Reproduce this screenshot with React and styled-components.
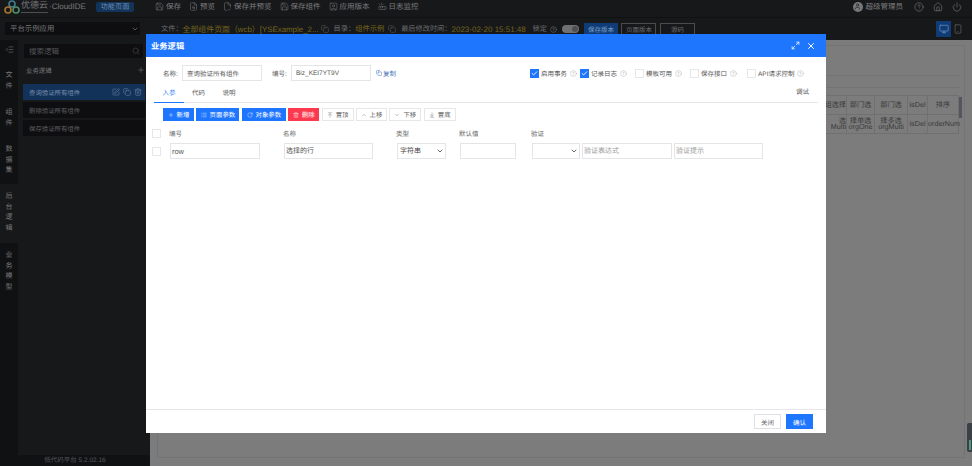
import styled, { createGlobalStyle } from "styled-components";
import {
  Save, FileSearch, FileCheck2, SquareUser, Projector, CircleHelp, House, Power, Copy, Search,
  Plus, SquarePen, Trash2, Monitor, Smartphone, Maximize2, X, List, RotateCw, ChevronUp, ChevronDown,
  ArrowUpToLine, ArrowDownToLine, User, Check, IndentDecrease,
} from "lucide-react";

const GlobalStyle = createGlobalStyle`
  html, body { margin: 0; padding: 0; background: #17181a; }
  body {
    font-family: "Liberation Sans", "Noto Sans CJK SC", sans-serif;
    text-rendering: geometricPrecision;
  }
  input { text-rendering: geometricPrecision; }
  * { box-sizing: border-box; }
`;

const Page = styled.div`
  position: relative;
  width: 972px;
  height: 466px;
  overflow: hidden;
  display: flex;
  flex-direction: column;
  background: #17181a;
`;

const TopBar = styled.div`
  height: 18px;
  flex: none;
  display: flex;
  align-items: center;
  padding: 0 10px 4px 4px;
  border-bottom: 1px solid #101113;
  color: #7d7e80;
  font-size: 7.5px;
`;

const Brand = styled.div`
  display: flex;
  align-items: center;
  width: 151px;
  flex: none;
`;

const BrandName = styled.span`
  margin-left: 1px;
  width: 27px;
  font-size: 9px;
  line-height: 9px;
  color: #77787a;
  display: flex;
  flex-direction: column;
  gap: 2px;
  white-space: nowrap;
`;

const BrandStrip = styled.span`
  height: 1px;
  background: #4e4f51;
`;

const BrandTag = styled.span`
  margin-left: 1px;
  font-size: 8px;
  color: #77787a;
  width: 47px;
  white-space: nowrap;
`;

const FuncTag = styled.span`
  background: #12345a;
  color: #6f8fb3;
  font-size: 7.2px;
  line-height: 10px;
  border-radius: 2px;
  width: 38px;
  text-align: center;
  white-space: nowrap;
`;

const MenuItem = styled.span`
  display: flex;
  align-items: center;
  gap: 2px;
  margin-right: 8px;
  white-space: nowrap;
`;

const TopRight = styled.div`
  margin-left: auto;
  display: flex;
  align-items: center;
  gap: 9px;
`;

const UserBox = styled.span`
  display: flex;
  align-items: center;
  gap: 3px;
  margin-right: 2px;
`;

const Avatar = styled.span`
  width: 10px;
  height: 10px;
  border-radius: 50%;
  background: #77787a;
  color: #17181a;
  display: flex;
  align-items: center;
  justify-content: center;
`;

const Body = styled.div`
  flex: 1;
  display: flex;
  min-height: 0;
`;

const Sidebar = styled.div`
  width: 150px;
  flex: none;
  display: flex;
  flex-direction: column;
`;

const AppSelect = styled.div`
  height: 22px;
  flex: none;
  padding: 4px 10px 5px 5px;
`;

const AppSelectBox = styled.div`
  height: 13px;
  background: #0e0e10;
  color: #77787a;
  font-size: 7.4px;
  display: flex;
  align-items: center;
  justify-content: space-between;
  padding: 0 1px 0 5px;
`;

const SideMain = styled.div`
  flex: 1;
  display: flex;
  min-height: 0;
`;

const Rail = styled.div`
  width: 18px;
  flex: none;
  display: flex;
  flex-direction: column;
  background: #101113;
  padding-top: 5px;
`;

const RailIcon = styled.div`
  height: 19px;
  display: flex;
  justify-content: center;
  color: #77787a;
`;

const RailTab = styled.div`
  height: ${(p) => p.$h}px;
  padding-top: ${(p) => p.$top}px;
  flex: none;
  display: flex;
  flex-direction: column;
  align-items: center;
  font-size: 7px;
  line-height: 10.6px;
  color: #77787a;
  background: ${(p) => (p.$active ? "#17181a" : "#101113")};
`;

const SidePanel = styled.div`
  flex: 1;
  display: flex;
  flex-direction: column;
  padding: 4px 5px 0 5px;
  min-width: 0;
`;

const SearchBox = styled.div`
  height: 14px;
  width: 119px;
  margin-left: 1px;
  background: #0e0e10;
  color: #55565a;
  font-size: 7.5px;
  display: flex;
  align-items: center;
  justify-content: space-between;
  padding: 0 3px 0 5px;
`;

const ListTitle = styled.div`
  display: flex;
  justify-content: space-between;
  align-items: center;
  height: 12px;
  margin: 6px 0 8px 3px;
  font-size: 6.4px;
  color: #77787a;
`;

const LogicRow = styled.div`
  height: 16px;
  margin-bottom: 2px;
  width: 122px;
  display: flex;
  align-items: center;
  justify-content: space-between;
  padding: 0 0 0 6px;
  font-size: 6.4px;
  color: ${(p) => (p.$active ? "#7d93ad" : "#5f6062")};
  background: ${(p) => (p.$active ? "#12325a" : "#0e0e10")};
`;

const RowIcons = styled.span`
  display: flex;
  gap: 3px;
  color: #7d93ad;
  margin-right: 3px;
`;

const Version = styled.div`
  margin-top: auto;
  height: 11px;
  flex: none;
  background: #101113;
  color: #55565a;
  font-size: 6.5px;
  line-height: 11px;
  text-align: center;
`;

const Main = styled.div`
  flex: 1;
  display: flex;
  flex-direction: column;
  min-width: 0;
`;

const FileBar = styled.div`
  height: 22px;
  flex: none;
  display: flex;
  align-items: center;
  padding: 0 9px 0 11px;
  font-size: 7.2px;
  color: #6b6c6e;
  white-space: nowrap;
`;

const FileValue = styled.span`
  color: #75651a;
  flex: none;
  font-size: ${(p) => p.$size || 7.3}px;
  width: ${(p) => p.$w}px;
`;

const CopyMark = styled.span`
  display: inline-flex;
  margin: 0 5px 0 3px;
  color: #6b6c6e;
`;

const LockLabel = styled.span`
  margin-left: 5px;
`;

const Toggle = styled.span`
  width: 17px;
  height: 8px;
  border-radius: 4px;
  background: #6f7072;
  margin: 0 5px;
  flex: none;
  display: flex;
  justify-content: flex-end;
  padding: 1px;
`;

const ToggleKnob = styled.span`
  width: 6px;
  height: 6px;
  border-radius: 50%;
  background: #4e4f51;
`;

const BarButton = styled.span`
  height: 12px;
  width: ${(p) => p.$w}px;
  margin-right: 3.5px;
  flex: none;
  display: flex;
  align-items: center;
  justify-content: center;
  font-size: 6.5px;
  color: ${(p) => (p.$primary ? "#7d9fc8" : "#6b6c6e")};
  background: ${(p) => (p.$primary ? "#0f3c76" : "transparent")};
  border: 1px solid ${(p) => (p.$primary ? "#0f3c76" : "#4a4b4d")};
`;

const DeviceBox = styled.div`
  margin-left: auto;
  display: flex;
  align-items: center;
  gap: 2px;
  color: #6b6c6e;
`;

const DeviceTile = styled.span`
  width: 15px;
  height: 16px;
  background: #0f3c76;
  color: #7d9fc8;
  display: flex;
  align-items: center;
  justify-content: center;
`;

const Canvas = styled.div`
  flex: 1;
  background: #7c7c7c;
  padding: 5px 7px 8px 7px;
  min-height: 0;
`;

const CanvasPanel = styled.div`
  height: 100%;
  border: 1px solid #747474;
  padding: 29px 5px 0 0;
  position: relative;
  display: flex;
  flex-direction: column;
  align-items: flex-end;
`;

const HeaderStrip = styled.div`
  width: 100%;
  height: 13px;
  flex: none;
  border-top: 1px solid #747474;
  border-bottom: 1px solid #747474;
  margin-bottom: 7px;
`;

const BgTable = styled.div`
  display: grid;
  grid-template-columns: 40px 28px 33px 20px 31px;
  grid-auto-rows: 19px;
  color: #3a3a3a;
  font-size: 7.2px;
  border-top: 1px solid #707070;
`;

const BgCell = styled.div`
  border-right: 1px solid #707070;
  border-bottom: 1px solid #707070;
  text-align: ${(p) => (p.$end ? "right" : "center")};
  line-height: ${(p) => (p.$stack ? "6px" : "18px")};
  padding-top: ${(p) => (p.$stack ? "3px" : "0")};
  white-space: ${(p) => (p.$stack ? "pre" : "nowrap")};
`;

const BgScroll = styled.span`
  position: absolute;
  right: 2px;
  top: 51px;
  width: 3px;
  height: 21px;
  background: #55555f;
`;

const Widget = styled.div`
  position: absolute;
  right: 0;
  top: 423px;
  width: 5px;
  height: 29px;
  background: #3a3f48;
  border-radius: 2px 0 0 2px;
  padding: 17px 1px 2px 2px;
`;

const WidgetBar = styled.div`
  height: 100%;
  background: #4f9a7c;
`;

const Modal = styled.div`
  position: absolute;
  left: 146px;
  top: 34px;
  width: 680px;
  height: 399px;
  background: #fff;
  display: flex;
  flex-direction: column;
  color: #555;
  font-size: 6.5px;
`;

const ModalHeader = styled.div`
  height: 23px;
  flex: none;
  background: #1e76ff;
  color: #fff;
  font-size: 8.3px;
  font-weight: 700;
  display: flex;
  align-items: center;
  justify-content: space-between;
  padding: 0 10px 0 5px;
`;

const HeaderIcons = styled.span`
  display: flex;
  align-items: center;
  gap: 6px;
`;

const ModalBody = styled.div`
  flex: 1;
  padding: 8px 8px 0 8px;
  display: flex;
  flex-direction: column;
  min-height: 0;
`;

const FormRow = styled.div`
  height: 16px;
  flex: none;
  display: flex;
  align-items: center;
  padding-left: 9px;
`;

const FieldLabel = styled.span`
  width: ${(p) => p.$w}px;
  padding-left: ${(p) => p.$pad || 0}px;
  flex: none;
  white-space: nowrap;
`;

const TextField = styled.input`
  height: 16px;
  width: ${(p) => p.$w}px;
  flex: none;
  border: 1px solid #e3e5e8;
  padding: 0 ${(p) => p.$pad || 1}px;
  margin: 0;
  outline: none;
  border-radius: 0;
  font: inherit;
  font-size: ${(p) => p.$size || 6.5}px;
  line-height: 12px;
  color: #555;
  background: #fff;
  &::placeholder { color: #9a9a9a; }
`;

const CopyLink = styled.span`
  display: flex;
  align-items: center;
  gap: 1px;
  margin-left: 5px;
  color: #4a78b8;
  font-size: 6.5px;
`;

const Options = styled.div`
  margin-left: auto;
  display: flex;
  align-items: center;
  padding-right: 15px;
`;

const Option = styled.span`
  display: flex;
  align-items: center;
  width: ${(p) => p.$w}px;
  flex: none;
  white-space: nowrap;
`;

const Box = styled.span`
  width: 9px;
  height: 9px;
  flex: none;
  margin-right: 2px;
  border: 1px solid ${(p) => (p.$on ? "#1e76ff" : "#e6e7ea")};
  background: ${(p) => (p.$on ? "#1e76ff" : "#fff")};
  color: #fff;
  display: flex;
  align-items: center;
  justify-content: center;
`;

const Help = styled.span`
  display: inline-flex;
  margin-left: 3px;
  color: #999;
`;

const Tabs = styled.div`
  height: 22px;
  flex: none;
  border-bottom: 1px solid #e6e7ea;
  display: flex;
  align-items: flex-end;
  padding-right: 9px;
`;

const Tab = styled.span`
  width: ${(p) => p.$w}px;
  height: 15px;
  flex: none;
  text-align: center;
  margin-bottom: -1px;
  line-height: 11px;
  color: ${(p) => (p.$active ? "#1e76ff" : "#555")};
  border-bottom: 1px solid ${(p) => (p.$active ? "#1e76ff" : "transparent")};
`;

const TabRight = styled.span`
  margin-left: auto;
  height: 15px;
  line-height: 11px;
`;

const Toolbar = styled.div`
  height: 13px;
  flex: none;
  margin: 5px 0 0 9px;
  display: flex;
  gap: 2.4px;
`;

const ToolButton = styled.span`
  width: ${(p) => p.$w}px;
  flex: none;
  display: flex;
  align-items: center;
  justify-content: center;
  gap: 3px;
  font-size: 6.4px;
  white-space: nowrap;
  color: ${(p) => (p.$kind ? "#fff" : "#666")};
  background: ${(p) => (p.$kind === "danger" ? "#fb3a4f" : p.$kind === "primary" ? "#1e76ff" : "#fff")};
  border: 1px solid ${(p) => (p.$kind === "danger" ? "#fb3a4f" : p.$kind === "primary" ? "#1e76ff" : "#e6e7ea")};
`;

const ParamGrid = styled.div`
  margin: 4px 0 0 -2px;
  display: grid;
  grid-template-columns: 18px 114px 113px 63px 72px 1fr;
  grid-template-rows: 16px 16px;
  row-gap: 2px;
  align-items: center;
`;

const HeadCell = styled.span`
  margin-left: -1px;
  color: #666;
`;

const CheckCell = styled.span`
  display: flex;
  align-items: center;
`;

const InlineFields = styled.span`
  display: flex;
  gap: 2px;
`;

const FakeSelect = styled.span`
  width: ${(p) => p.$w}px;
  height: 16px;
  flex: none;
  border: 1px solid #e3e5e8;
  display: flex;
  align-items: center;
  justify-content: space-between;
  padding: 0 1px 0 2px;
  font-size: 7px;
  color: #444;
`;

const ModalFooter = styled.div`
  height: 24px;
  flex: none;
  border-top: 1px solid #e6e7ea;
  display: flex;
  align-items: center;
  justify-content: flex-end;
  gap: 5px;
  padding-right: 13px;
`;

const FooterButton = styled.span`
  width: 27px;
  height: 15px;
  display: flex;
  align-items: center;
  justify-content: center;
  font-size: 6.5px;
  color: ${(p) => (p.$primary ? "#fff" : "#666")};
  background: ${(p) => (p.$primary ? "#1e76ff" : "#fff")};
  border: 1px solid ${(p) => (p.$primary ? "#1e76ff" : "#e0e1e4")};
`;

const Logo = () => (
  <svg width="16" height="14" viewBox="0 0 16 14" fill="none" strokeWidth="1.6">
    <circle cx="8" cy="4" r="3" stroke="#3f7d8f" />
    <circle cx="4" cy="10" r="3" stroke="#a8752a" />
    <circle cx="12" cy="10" r="3" stroke="#4d8f6a" />
  </svg>
);

const menu = [
  [Save, "保存"],
  [FileSearch, "预览"],
  [FileCheck2, "保存并预览"],
  [Save, "保存组件"],
  [SquareUser, "应用版本"],
  [Projector, "日志监控"],
];

const railTabs = [
  { chars: "文件", h: 37, top: 7 },
  { chars: "组件", h: 37, top: 7 },
  { chars: "数据集", h: 46, top: 7 },
  { chars: "后台逻辑", h: 59, top: 8, active: true },
  { chars: "业务模型", h: 60, top: 8 },
];

const options = [
  ["启用事务", true, 50],
  ["记录日志", true, 55],
  ["模板可用", false, 55],
  ["保存接口", false, 57],
  ["API请求控制", false, 56],
];

const tools = [
  ["新增", Plus, "primary", 31],
  ["页面参数", List, "primary", 43],
  ["对象参数", RotateCw, "primary", 44],
  ["删除", Trash2, "danger", 31],
  ["置顶", ArrowUpToLine, null, 32],
  ["上移", ChevronUp, null, 31],
  ["下移", ChevronDown, null, 32],
  ["置底", ArrowDownToLine, null, 32],
];

const bgHead = ["组选择", "部门选", "部门选", "isDel", "排序"];
const bgRow = ["选\nMulti", "择单选\norgOne", "择多选\norgMulti", "isDel", "orderNum"];

const App = () => (
  <Page>
    <GlobalStyle />
    <TopBar>
      <Brand>
        <Logo />
        <BrandName>
          优德云
          <BrandStrip />
        </BrandName>
        <BrandTag>·CloudIDE</BrandTag>
        <FuncTag>功能页面</FuncTag>
      </Brand>
      {menu.map(([Icon, label], i) => (
        <MenuItem key={i}>
          <Icon size={9} strokeWidth={1.3} />
          {label}
        </MenuItem>
      ))}
      <TopRight>
        <UserBox>
          <Avatar><User size={7} strokeWidth={2} /></Avatar>
          超级管理员
        </UserBox>
        <CircleHelp size={10} strokeWidth={1.4} />
        <House size={10} strokeWidth={1.4} />
        <Power size={10} strokeWidth={1.4} />
      </TopRight>
    </TopBar>
    <Body>
      <Sidebar>
        <AppSelect>
          <AppSelectBox>
            平台示例应用
            <ChevronDown size={8} />
          </AppSelectBox>
        </AppSelect>
        <SideMain>
          <Rail>
            <RailIcon><IndentDecrease size={9} strokeWidth={1.5} /></RailIcon>
            {railTabs.map((tab) => (
              <RailTab key={tab.chars} $h={tab.h} $top={tab.top} $active={tab.active}>
                {[...tab.chars].map((c, i) => <span key={i}>{c}</span>)}
              </RailTab>
            ))}
          </Rail>
          <SidePanel>
            <SearchBox>
              搜索逻辑
              <Search size={8} strokeWidth={1.5} />
            </SearchBox>
            <ListTitle>
              业务逻辑
              <Plus size={8} strokeWidth={1.5} />
            </ListTitle>
            <LogicRow $active>
              查询验证所有组件
              <RowIcons>
                <SquarePen size={8} strokeWidth={1.4} />
                <Copy size={8} strokeWidth={1.4} />
                <Trash2 size={8} strokeWidth={1.4} />
              </RowIcons>
            </LogicRow>
            <LogicRow>删除验证所有组件</LogicRow>
            <LogicRow>保存验证所有组件</LogicRow>
          </SidePanel>
        </SideMain>
        <Version>低代码平台 5.2.02.16</Version>
      </Sidebar>
      <Main>
        <FileBar>
          文件：<FileValue $size={7.9} $w={135}>全部组件页面（wcb）[YSExample_2...</FileValue>
          <CopyMark><Copy size={8} strokeWidth={1.3} /></CopyMark>
          目录：<FileValue $w={30}>组件示例</FileValue>
          <CopyMark><Copy size={8} strokeWidth={1.3} /></CopyMark>
          最后修改时间：<FileValue $size={8} $w={76}>2023-02-20 15:51:48</FileValue>
          <LockLabel>锁定</LockLabel>
          <Help><CircleHelp size={7} strokeWidth={1.2} /></Help>
          <Toggle><ToggleKnob /></Toggle>
          <BarButton $primary $w={34}>保存版本</BarButton>
          <BarButton $w={35}>页面版本</BarButton>
          <BarButton $w={35}>源码</BarButton>
          <DeviceBox>
            <DeviceTile><Monitor size={10} strokeWidth={1.5} /></DeviceTile>
            <Smartphone size={10} strokeWidth={1.5} />
          </DeviceBox>
        </FileBar>
        <Canvas>
          <CanvasPanel>
            <HeaderStrip />
            <BgTable>
              {bgHead.map((c, i) => <BgCell key={i} $end={i === 0}>{c}</BgCell>)}
              {bgRow.map((c, i) => <BgCell key={i} $end={i === 0} $stack={i < 3}>{c}</BgCell>)}
            </BgTable>
            <BgScroll />
          </CanvasPanel>
        </Canvas>
      </Main>
    </Body>
    <Widget><WidgetBar /></Widget>
    <Modal>
      <ModalHeader>
        业务逻辑
        <HeaderIcons>
          <Maximize2 size={9} strokeWidth={2} />
          <X size={10} strokeWidth={2.4} />
        </HeaderIcons>
      </ModalHeader>
      <ModalBody>
        <FormRow>
          <FieldLabel $w={19}>名称:</FieldLabel>
          <TextField $w={80} $pad={4} defaultValue="查询验证所有组件" />
          <FieldLabel $w={29} $pad={10}>编号:</FieldLabel>
          <TextField $w={80} $pad={4} defaultValue="Biz_KEI7YT9V" />
          <CopyLink><Copy size={6} strokeWidth={2} />复制</CopyLink>
          <Options>
            {options.map(([label, on, w]) => (
              <Option key={label} $w={w}>
                <Box $on={on}>{on && <Check size={7} strokeWidth={3} />}</Box>
                {label}
                <Help><CircleHelp size={7} strokeWidth={1.2} /></Help>
              </Option>
            ))}
          </Options>
        </FormRow>
        <Tabs>
          <Tab $active $w={30}>入参</Tab>
          <Tab $w={29}>代码</Tab>
          <Tab $w={32}>说明</Tab>
          <TabRight>调试</TabRight>
        </Tabs>
        <Toolbar>
          {tools.map(([label, Icon, kind, w]) => (
            <ToolButton key={label} $kind={kind} $w={w}>
              <Icon size={6} strokeWidth={1.6} />
              {label}
            </ToolButton>
          ))}
        </Toolbar>
        <ParamGrid>
          <CheckCell><Box /></CheckCell>
          <HeadCell>编号</HeadCell>
          <HeadCell>名称</HeadCell>
          <HeadCell>类型</HeadCell>
          <HeadCell>默认值</HeadCell>
          <HeadCell>验证</HeadCell>
          <CheckCell><Box /></CheckCell>
          <TextField $w={90} $size={7.4} defaultValue="row" />
          <TextField $w={89} $size={7} defaultValue="选择的行" />
          <FakeSelect $w={49}>字符串<ChevronDown size={8} strokeWidth={2.4} /></FakeSelect>
          <TextField $w={56} />
          <InlineFields>
            <FakeSelect $w={48}><span /><ChevronDown size={8} strokeWidth={2.4} /></FakeSelect>
            <TextField $w={90} $size={7} placeholder="验证表达式" />
            <TextField $w={89} $size={7} placeholder="验证提示" />
          </InlineFields>
        </ParamGrid>
      </ModalBody>
      <ModalFooter>
        <FooterButton>关闭</FooterButton>
        <FooterButton $primary>确认</FooterButton>
      </ModalFooter>
    </Modal>
  </Page>
);

export default App;
